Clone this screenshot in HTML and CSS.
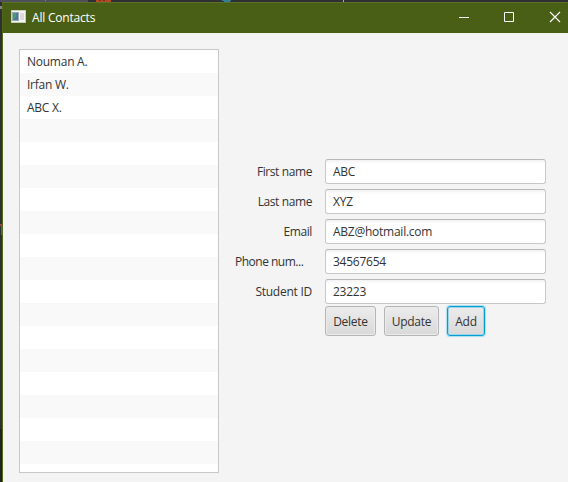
FILE: index.html
```html
<!DOCTYPE html>
<html lang="en">
<head>
<meta charset="utf-8">
<title>All Contacts</title>
<link rel="stylesheet" href="styles.css">
</head>
<body>
<svg class="backdrop" width="568" height="482" aria-hidden="true">
  <path fill="#50505a" d="M0 0h88v2H0z"/>
  <path fill="#85858a" d="M0 6h2v3H0zM45 0h1v1h-1z"/>
  <path fill="#b34a25" d="M96 0h15v2H96z"/>
  <path fill="#6d3422" d="M99 0h2v1h-2zM103 0h2v1h-2z"/>
  <path fill="#357f96" d="M222 0h9v1h-1v1h-6v-1h-2z"/>
  <path fill="#b8a5a5" d="M343 0h1v2h-1z"/>
  <path fill="#a34248" d="M0 224h2v11H1v-9H0z"/>
  <path fill="#222226" d="M0 429h2v53H0z"/>
</svg>
<div class="window">
  <header class="titlebar">
    <svg class="app-icon" width="16" height="14" viewBox="0 0 16 14">
      <path fill="#c6cdbb" d="M0 0h15v13H0z"/>
      <path fill="#f4f4f4" d="M1 1h13v11H1z"/>
      <path fill="#9ca6b3" d="M1 2h7v9H1z"/>
      <path fill="#467b9d" d="M2 3h5v7H2z"/>
      <path fill="#459b79" d="M2 3h3v4H4v2H2z"/>
      <path fill="#dadada" d="M9 3h4v7H9z"/>
    </svg>
    <h1 class="title">All Contacts</h1>
    <div class="controls">
      <svg width="10" height="10"><path fill="#fff" d="M0 5h10v1H0z"/></svg>
      <svg width="10" height="10"><path fill="none" stroke="#fff" d="M.5 .5h9v9h-9z"/></svg>
      <svg class="close" width="10" height="10"><path fill="none" stroke="#fff" stroke-width="1.2" d="M0 0l10 10M10 0L0 10"/></svg>
    </div>
  </header>
  <main class="content">
    <ul class="list">
      <li>Nouman A.</li>
      <li>Irfan W.</li>
      <li>ABC X.</li>
    </ul>
    <div class="form">
      <div class="row"><span class="label">First name</span><div class="field">ABC</div></div>
      <div class="row"><span class="label">Last name</span><div class="field">XYZ</div></div>
      <div class="row"><span class="label">Email</span><div class="field">ABZ@hotmail.com</div></div>
      <div class="row"><span class="label clipped">Phone num...</span><div class="field">34567654</div></div>
      <div class="row"><span class="label wide">Student ID</span><div class="field">23223</div></div>
      <div class="buttons">
        <button class="delete">Delete</button>
        <button class="update">Update</button>
        <button class="add">Add</button>
      </div>
    </div>
  </main>
</div>
</body>
</html>
```
FILE: styles.css
```css
* { box-sizing: border-box; }
body {
  margin: 0;
  width: 568px;
  height: 482px;
  padding: 2px 0 0 2px;
  overflow: hidden;
  background: #303034;
  color: #333;
  font: 12px/23px "Open Sans", "Noto Sans", sans-serif;
  letter-spacing: -0.25px;
}
.backdrop { position: absolute; left: 0; top: 0; }
.window {
  position: relative;
  height: 480px;
  border-left: 1px solid #4f6818;
  border-top: 1px solid #59712a;
  background: #f4f4f4;
}
.titlebar {
  display: flex;
  align-items: center;
  height: 30px;
  padding: 0 8px;
  background: #4a5f16;
  color: #fff;
}
.app-icon { margin: -2px 5px 0 0; }
.title { margin: -1px 0 0; font-size: 12px; font-weight: 400; letter-spacing: -0.2px; }
.controls { display: flex; gap: 35px; margin: -2px 0 0 auto; }
.controls svg { display: block; }
.controls .close { margin-left: 1px; overflow: visible; }
.content { display: flex; padding: 16px 0 0 16px; }
.list {
  width: 200px;
  height: 424px;
  margin: 0;
  padding: 0;
  list-style: none;
  border: 1px solid #c8c8c8;
  background: repeating-linear-gradient(#fff 0 23px, #f9f9f9 23px 46px);
}
.list li { height: 23px; padding-left: 7px; line-height: 24px; }
.form { width: 311px; margin: 110px 0 0 16px; }
.row { display: flex; height: 25px; margin-bottom: 5px; }
.label { width: 77px; margin-right: 13px; line-height: 26px; text-align: right; white-space: nowrap; letter-spacing: -0.4px; }
.clipped { text-align: left; letter-spacing: -0.5px; }
.wide { letter-spacing: -0.25px; }
.field {
  width: 221px;
  height: 25px;
  padding-left: 7px;
  border: 1px solid #c8c8c8;
  border-top-color: #b8b8b8;
  border-radius: 3px;
  background: linear-gradient(#f2f2f2, #fff 4px);
  line-height: 24px;
}
.buttons { display: flex; gap: 8px; margin: -3px 0 0 90px; }
button {
  height: 30px;
  padding: 1px 0 0;
  border: 1px solid #b5b5b5;
  border-radius: 3px;
  background: linear-gradient(#ececec, #d9d9d9);
  box-shadow: inset 0 0 0 1px #ebebeb;
  color: #333;
  font: inherit;
  letter-spacing: inherit;
}
.delete { width: 51px; }
.update { width: 55px; }
.add {
  width: 38px;
  border-color: #039ed3;
  box-shadow: 0 0 1px 1px #a9ddee, inset 0 0 0 1px #9fd3e6;
}
```
